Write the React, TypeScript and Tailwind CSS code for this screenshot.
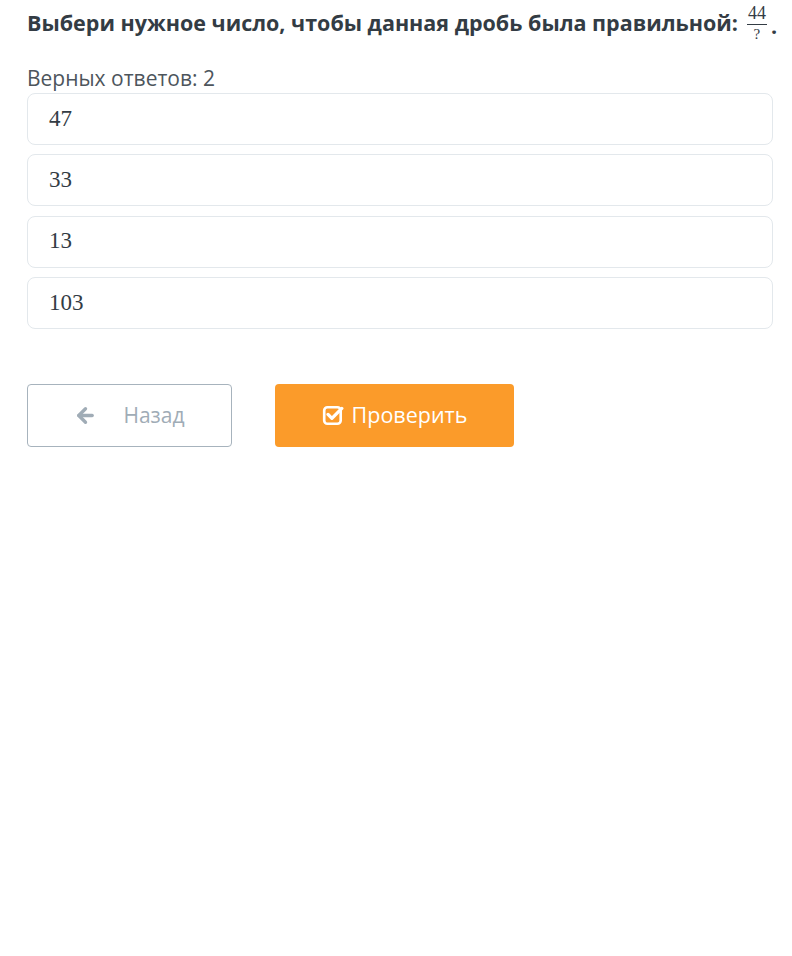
import { ArrowLeft } from "lucide-react";

const options = ["47", "33", "13", "103"];

function CheckSquare() {
  return (
    <svg width="22" height="22" viewBox="0 0 20 20" fill="none">
      <rect x="2" y="3" width="15" height="15" rx="3" stroke="white" strokeWidth="2.4" />
      <path d="M5.5 9.5l3.5 3.5L18 4" stroke="white" strokeWidth="3" strokeLinecap="round" strokeLinejoin="round" />
    </svg>
  );
}

export default function App() {
  return (
    <div className="min-h-[956px] w-[792px] bg-white pl-[27px] text-[#333c44]" style={{ fontFamily: '"Open Sans", sans-serif' }}>
      <div className="w-[746px]">
        {/* Question */}
        <div className="flex h-[44px] items-center whitespace-nowrap pt-[2px] text-[21.5px] font-bold">
          <span>Выбери нужное число, чтобы данная дробь была правильной:</span>
          <span className="ml-[9px] inline-flex flex-col items-center font-normal leading-none" style={{ fontFamily: '"Liberation Serif", serif' }}>
            <span className="border-b border-[#333c44] px-[1px] pb-[2px] text-[18px]">44</span>
            <span className="pt-[2px] text-[15px]">?</span>
          </span>
          <span className="ml-[4px] mt-[6px]">.</span>
        </div>

        <div className="mt-[20px] text-[21px] leading-[28px] text-[#4d555c]">Верных ответов: 2</div>

        {/* Options */}
        <div className="mt-px flex flex-col gap-[9.3px]">
          {options.map((o) => (
            <div
              key={o}
              className="flex h-[52px] items-center rounded-[8px] border border-[#e3e8ec] px-[21px] text-[23px] text-[#333c44]"
              style={{ fontFamily: '"Liberation Serif", serif' }}
            >
              {o}
            </div>
          ))}
        </div>

        {/* Buttons */}
        <div className="mt-[55px] flex gap-[43px]">
          <button className="flex h-[63px] w-[205px] items-center justify-center gap-[26px] rounded-[4px] border border-[#a7b3bd] bg-white text-[21px] text-[#a0acb6]">
            <ArrowLeft size={23} strokeWidth={3.5} className="text-[#a0acb6]" />
            <span>Назад</span>
          </button>
          <button className="flex h-[63px] w-[239px] items-center justify-center gap-[8px] rounded-[4px] bg-[#fb9b2a] text-[21.5px] text-white">
            <CheckSquare />
            <span>Проверить</span>
          </button>
        </div>
      </div>
    </div>
  );
}
